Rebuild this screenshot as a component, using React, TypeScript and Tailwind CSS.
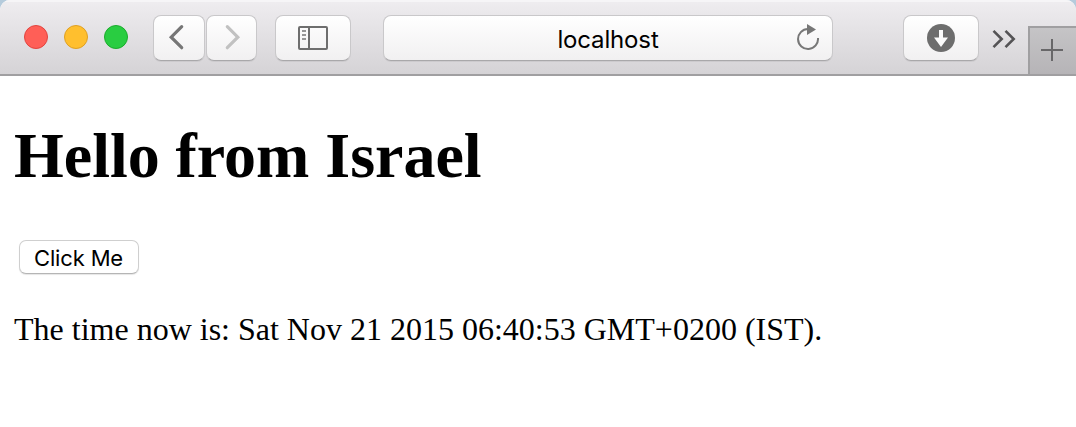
import type { ReactNode } from 'react';

const key =
  'flex h-[46px] shrink-0 items-center justify-center rounded-[8px] border border-[#c9c8ca] border-b-[#a9a8aa] bg-linear-to-b from-white to-[#f1f0f1] shadow-[0_1px_0_rgba(0,0,0,0.06)]';

function ToolbarButton({ label, className, children }: { label: string; className: string; children: ReactNode }) {
  return (
    <button aria-label={label} className={`${key} ${className}`}>
      {children}
    </button>
  );
}

function Toolbar() {
  return (
    <header className="flex h-[76px] items-start border-b-2 border-[#a09fa1] bg-linear-to-b from-[#efedf0] to-[#d5d3d6] shadow-[inset_0_2px_0_#f6f5f7]">
      <div className="flex shrink-0 gap-4 pt-[25px] pl-6">
        <span className="size-6 rounded-full border border-[#e2443f] bg-[#ff5f57]" />
        <span className="size-6 rounded-full border border-[#dfa023] bg-[#ffbf2e]" />
        <span className="size-6 rounded-full border border-[#1bac2c] bg-[#29cd41]" />
      </div>
      <nav className="ml-[25px] flex shrink-0 gap-px pt-[15px]">
        <ToolbarButton label="Back" className="w-[52px]">
          <svg width="52" height="44" className="shrink-0" fill="none" stroke="#767676" strokeWidth="3.2" strokeLinecap="round">
            <path d="M28.7 10.7 18.2 21.2 28.7 31.7" />
          </svg>
        </ToolbarButton>
        <ToolbarButton label="Forward" className="w-[51px]">
          <svg width="50" height="44" className="shrink-0" fill="none" stroke="#c1c1c1" strokeWidth="3.2" strokeLinecap="round">
            <path d="M20.3 10.7 30.8 21.2 20.3 31.7" />
          </svg>
        </ToolbarButton>
      </nav>
      <div className="ml-[18px] flex shrink-0 pt-[15px]">
        <ToolbarButton label="Show sidebar" className="w-[76px]">
          <svg width="30" height="24" fill="none" stroke="#6e6e6e">
            <rect x="1" y="1" width="28" height="22" rx="1" strokeWidth="2" />
            <path d="M11 1V23" strokeWidth="2" />
            <path d="M4 5H8M4 9H8M4 13H8" stroke="#969696" strokeWidth="2" />
          </svg>
        </ToolbarButton>
      </div>
      <div className="ml-8 flex shrink-0 pt-[15px]">
        <div className={`${key} w-[450px]`}>
          <span className="w-[35px]" />
          <span className="flex-1 pt-[4px] text-center font-[Inter,sans-serif] text-[24px] leading-7 tracking-[-0.15px] text-black">localhost</span>
          <svg width="24" height="28" viewBox="0 0 24 28" className="mr-[11px]">
            <path d="M11 5A10 10 0 1 0 21 14" fill="none" stroke="#777" strokeWidth="2" />
            <path d="M10 0 19 5.5 10 11Z" fill="#777" />
          </svg>
        </div>
      </div>
      <div className="ml-[70px] flex shrink-0 pt-[15px]">
        <ToolbarButton label="Downloads" className="w-[76px]">
          <svg width="28" height="28">
            <circle cx="14" cy="14" r="14" fill="#6d6d6d" />
            <path d="M12 6H16V13.5H21L14 23 7 13.5H12Z" fill="#fbfbfb" />
          </svg>
        </ToolbarButton>
      </div>
      <svg width="24" height="20" className="mt-[29px] ml-[13px] shrink-0" fill="none" stroke="#545355" strokeWidth="2.6">
        <path d="M1.5 1.8 9.7 10 1.5 18.2M13.5 1.8 21.7 10 13.5 18.2" />
      </svg>
      <button aria-label="New tab" className="mt-[26px] ml-auto flex h-12 w-12 shrink-0 items-start border-t-2 border-l-2 border-[#a09fa1] bg-linear-to-b from-[#c5c4c6] to-[#b6b4b7]">
        <svg width="46" height="46" stroke="#686769" strokeWidth="2">
          <path d="M22 11V33M11 22H33" />
        </svg>
      </button>
    </header>
  );
}

export default function App() {
  return (
    <div className="h-[427px] w-full overflow-hidden bg-[#b5cbdc]">
      <div className="h-full overflow-hidden rounded-t-[10px] bg-white">
        <Toolbar />
        <main className="flex flex-col items-start pt-11 pl-3.5 font-['Liberation_Serif',serif] text-black">
          <h1 className="text-[64px] leading-[72px] font-bold tracking-[-0.03px]">Hello from Israel</h1>
          <button className="mt-12 ml-[5px] h-[34px] w-[120px] rounded-[7px] border border-[#cfcfcf] border-b-[#b5b5b5] bg-white pt-[2px] pr-px font-[Inter,sans-serif] text-[22px] leading-[30px] tracking-[-0.15px] shadow-[0_1px_1px_rgba(0,0,0,0.1)]">
            Click Me
          </button>
          <p className="mt-[37px] text-[32px] leading-9">The time now is: Sat Nov 21 2015 06:40:53 GMT+0200 (IST).</p>
        </main>
      </div>
    </div>
  );
}
